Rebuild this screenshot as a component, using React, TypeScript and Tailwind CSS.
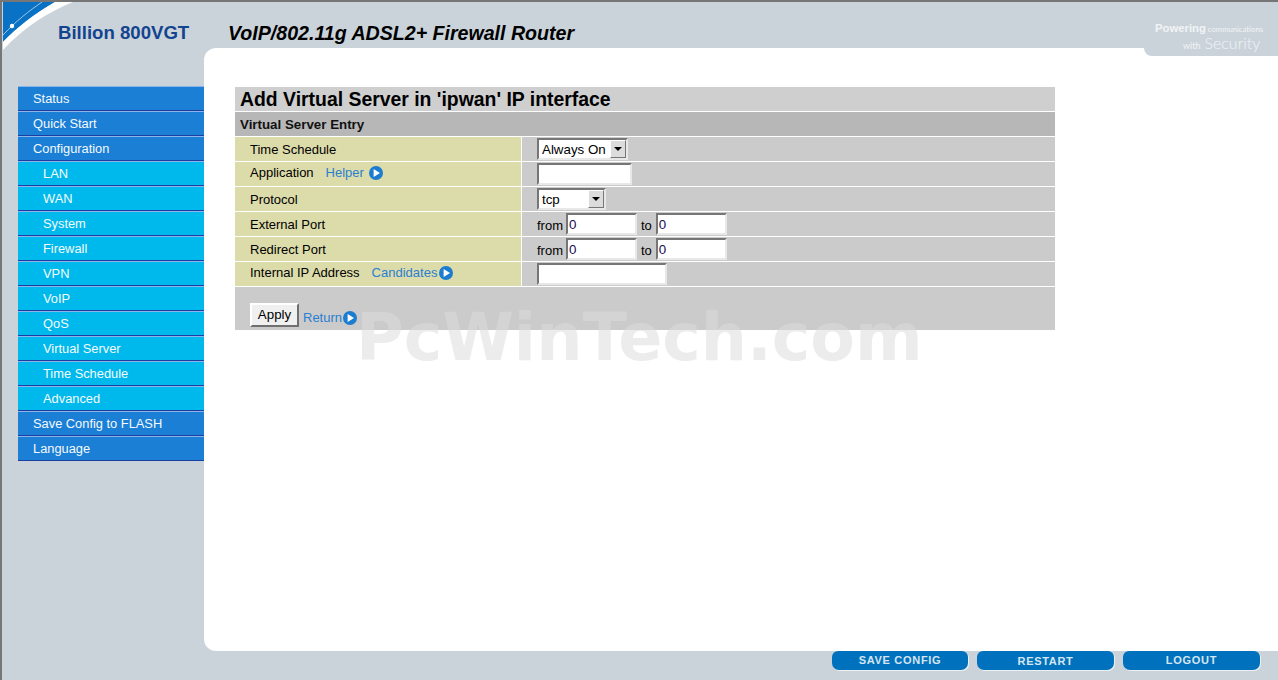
import type { ReactNode } from "react";

const menu = [
    { label: "Status" },
    { label: "Quick Start" },
    { label: "Configuration" },
    { label: "LAN", sub: true },
    { label: "WAN", sub: true },
    { label: "System", sub: true },
    { label: "Firewall", sub: true },
    { label: "VPN", sub: true },
    { label: "VoIP", sub: true },
    { label: "QoS", sub: true },
    { label: "Virtual Server", sub: true },
    { label: "Time Schedule", sub: true },
    { label: "Advanced", sub: true },
    { label: "Save Config to FLASH" },
    { label: "Language" },
];

const insetBox = "border-2 border-t-[#767676] border-l-[#767676] border-r-[#e8e8e8] border-b-[#e8e8e8] bg-white";

function GoIcon() {
    return (
        <svg width="14" height="14" viewBox="0 0 14 14" className="inline-block shrink-0">
            <circle cx="7" cy="7" r="7" fill="#1b7cd0" />
            <path d="M4.6 3 L11 7 L4.6 11 Z" fill="#ffffff" />
        </svg>
    );
}

function TextBox({ value = "", className }: { value?: string; className: string }) {
    return (
        <input
            readOnly
            value={value}
            className={`${insetBox} h-[22px] px-[1px] pt-[1px] text-[13.33px] leading-none text-[#1a0a50] outline-none ${className}`}
        />
    );
}

function SelectBox({ label, className }: { label: string; className: string }) {
    return (
        <div className={`${insetBox} flex h-[22px] items-center justify-between pl-[3px] text-[13.33px] text-black ${className}`}>
            <span className="pt-[2px]">{label}</span>
            <span className="flex h-[18px] w-[16px] items-center justify-center border border-t-white border-l-white border-r-[#777777] border-b-[#777777] bg-[#dcdcdc]">
                <span className="h-0 w-0 border-x-[4px] border-t-[4px] border-x-transparent border-t-black" />
            </span>
        </div>
    );
}

function FormRow({ label, children }: { label: ReactNode; children: ReactNode }) {
    return (
        <div className="flex h-[25px] border-b border-white">
            <div className="flex w-[287px] items-center border-r border-white bg-[#dcdbaa] pl-[15px] pt-[2px] text-black">
                {label}
            </div>
            <div className="flex flex-1 items-center gap-[3px] bg-[#cbcbcb] pl-[15px]">{children}</div>
        </div>
    );
}

function FooterButton({ label, className }: { label: string; className: string }) {
    return (
        <div className={`flex h-[19px] items-center justify-center rounded-b-[7px] rounded-t-[6px] bg-[#0071bd] text-[11px] font-bold tracking-[0.7px] text-[#d5e6f2] shadow-[1px_1px_0_#eef1f3] ${className}`}>
            {label}
        </div>
    );
}

export default function App() {
    return (
        <div className="relative flex h-[680px] w-[1278px] flex-col overflow-hidden border-l-2 border-t-2 border-[#767676] bg-[#cbd3da] font-['Liberation_Sans',Arial,sans-serif] text-[13px]">
            {/* swoosh in the corner */}
            <svg width="80" height="54" viewBox="0 0 80 54" className="absolute left-0 top-0">
                <path d="M1 0 H53 C34 11 15 25 1 40 Z" fill="#0a72c4" />
                <path d="M1 40 C15 25 34 11 53 0 H71 C46 10 21 26 1 48 Z" fill="#ffffff" />
                <path d="M1 33 C14 19 27 9 40 0" fill="none" stroke="#9cc7e8" strokeWidth="1" />
                <circle cx="10" cy="24" r="2.2" fill="#ffffff" />
            </svg>

            {/* slogan tab */}
            <div className="absolute right-0 top-[46px] z-10 h-[8px] w-[134px] rounded-bl-[10px] bg-[#cbd3da]" />
            <div className="absolute left-[1153px] top-[20px] z-10 w-[112px] text-[#f1f4f6]">
                <div className="flex items-baseline gap-[2px] leading-[12px]">
                    <span className="text-[11.3px] font-bold">Powering</span>
                    <span className="font-['Lato',sans-serif] text-[7.7px]">communications</span>
                </div>
                <div className="flex items-baseline gap-[4px] pl-[28px] leading-[15px]">
                    <span className="font-['Lato',sans-serif] text-[9px]">with</span>
                    <span className="font-['Lato',sans-serif] text-[16px] font-light">Security</span>
                </div>
            </div>

            <header className="flex h-[46px] shrink-0 items-start pt-[19px]">
                <div className="w-[170px] pl-[56px] text-[18.6px] font-bold leading-[24px] text-[#12448f] whitespace-nowrap">
                    Billion 800VGT
                </div>
                <div className="pl-[56px] text-[19.6px] font-bold italic leading-[24px] text-black whitespace-nowrap">
                    VoIP/802.11g ADSL2+ Firewall Router
                </div>
            </header>

            <div className="flex h-[603px] shrink-0">
                <nav className="w-[202px] shrink-0 pl-[16px] pt-[38px]">
                    {menu.map((item) => (
                        <div
                            key={item.label}
                            className={`flex h-[25px] items-center border-b border-b-[#1a3fa0] border-t border-t-[#8db4ea] text-[12.85px] text-[#f5f9fd] ${
                                item.sub ? "bg-[#00b9ec] pl-[25px]" : "bg-[#1b7fd6] pl-[15px]"
                            }`}
                        >
                            {item.label}
                        </div>
                    ))}
                </nav>

                <main className="relative flex-1 rounded-l-[12px] bg-white pl-[31px] pt-[39px]">
                    <div className="w-[820px]">
                        <div className="flex h-[25px] items-center border-b border-white bg-[#cfcfcf] pl-[5px] pt-[2px] text-[19.4px] font-bold text-black">
                            Add Virtual Server in 'ipwan' IP interface
                        </div>
                        <div className="flex h-[25px] items-center border-b border-white bg-[#b7b7b7] pl-[5px] pt-[1px] text-[13.33px] font-bold text-[#111111]">
                            Virtual Server Entry
                        </div>
                        <FormRow label="Time Schedule">
                            <SelectBox label="Always On" className="w-[91px]" />
                        </FormRow>
                        <FormRow
                            label={
                                <span className="-mt-[4px] flex items-center">
                                    Application
                                    <span className="ml-[12px] mr-[5px] text-[#2a7fd0]">Helper</span>
                                    <GoIcon />
                                </span>
                            }
                        >
                            <TextBox className="w-[95px]" />
                        </FormRow>
                        <FormRow label="Protocol">
                            <SelectBox label="tcp" className="w-[69px]" />
                        </FormRow>
                        <FormRow label="External Port">
                            <span className="pt-[4px]">from</span>
                            <TextBox value="0" className="w-[71px]" />
                            <span className="px-[1px] pt-[4px]">to</span>
                            <TextBox value="0" className="w-[71px]" />
                        </FormRow>
                        <FormRow label="Redirect Port">
                            <span className="pt-[4px]">from</span>
                            <TextBox value="0" className="w-[71px]" />
                            <span className="px-[1px] pt-[4px]">to</span>
                            <TextBox value="0" className="w-[71px]" />
                        </FormRow>
                        <FormRow
                            label={
                                <span className="-mt-[4px] flex items-center">
                                    Internal IP Address
                                    <span className="ml-[12px] mr-[2px] text-[#2a7fd0]">Candidates</span>
                                    <GoIcon />
                                </span>
                            }
                        >
                            <TextBox className="w-[130px]" />
                        </FormRow>
                        <div className="flex h-[43px] items-start bg-[#cbcbcb] pl-[15px] pt-[16px]">
                            <button className="h-[24px] w-[49px] border-2 border-t-white border-l-white border-r-[#707070] border-b-[#707070] bg-[#f0f0f0] text-[13.33px] leading-none text-black">
                                Apply
                            </button>
                            <span className="ml-[4px] mt-[5px] text-[#2a7fd0]">Return</span>
                            <span className="ml-[1px] mt-[4px]">
                                <GoIcon />
                            </span>
                        </div>
                    </div>

                    {/* site watermark */}
                    <div className="pointer-events-none absolute left-[152px] top-[251px] font-['DejaVu_Sans',sans-serif] text-[65px] font-bold leading-[78px] text-[#dddddd]/55 whitespace-nowrap">
                        PcWinTech.com
                    </div>
                </main>
            </div>

            <footer className="flex flex-1 items-start justify-end gap-[9px] pr-[18px]">
                <FooterButton label="SAVE CONFIG" className="w-[136px]" />
                <FooterButton label="RESTART" className="w-[137px] pt-[2px]" />
                <FooterButton label="LOGOUT" className="w-[137px]" />
            </footer>
        </div>
    );
}
